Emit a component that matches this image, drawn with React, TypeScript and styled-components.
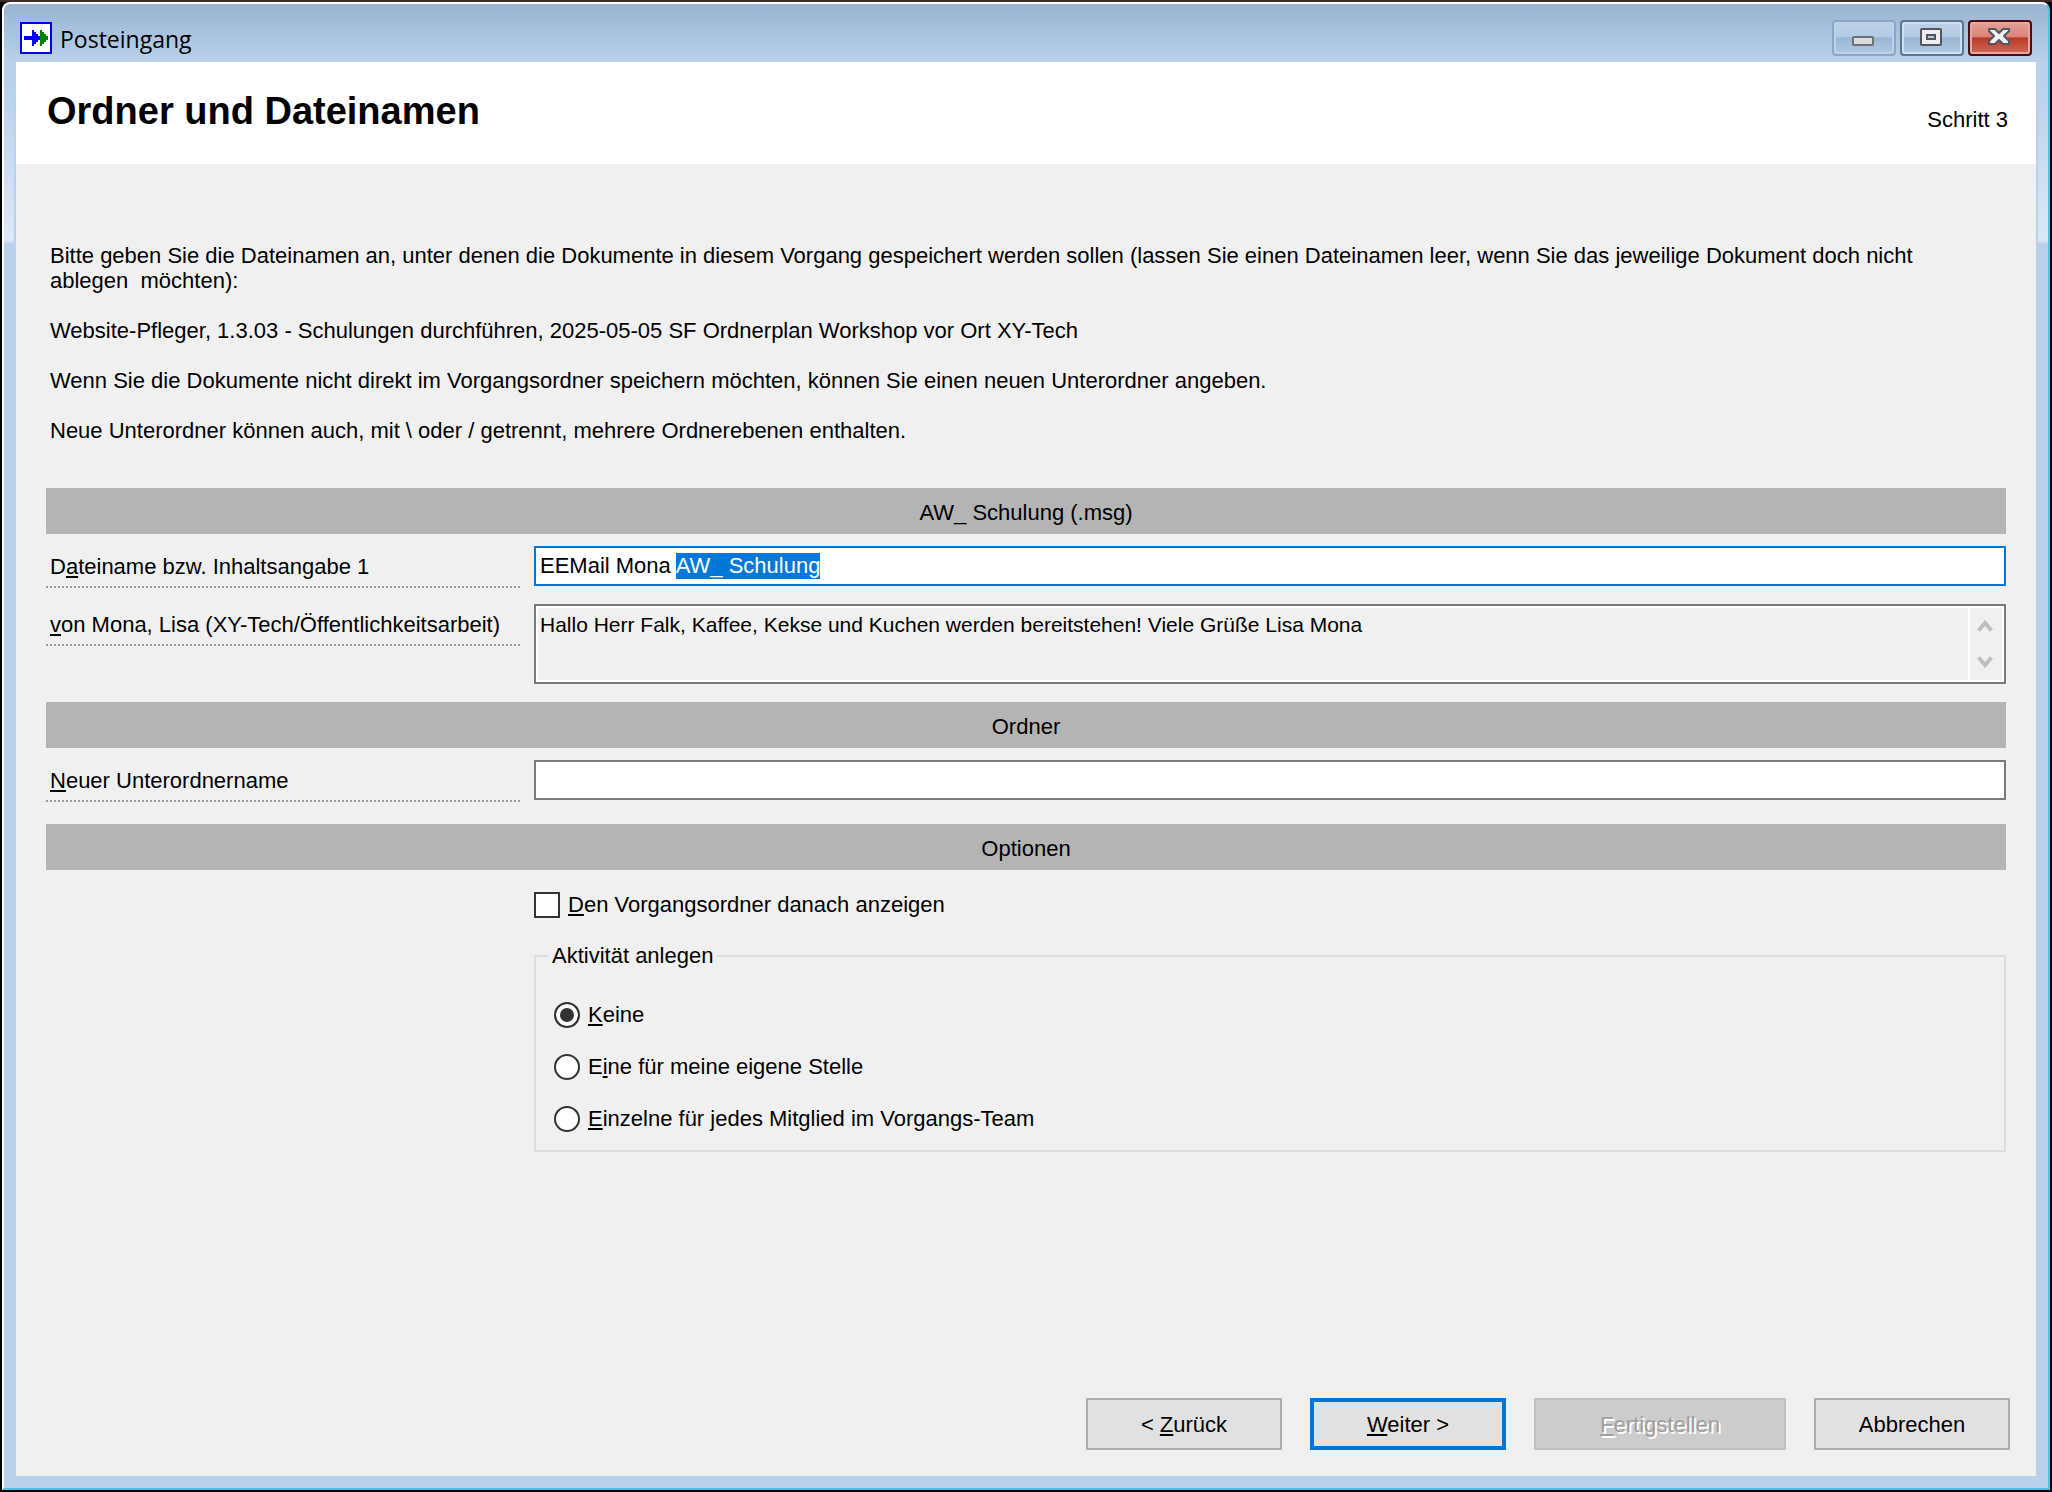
import React, { useEffect, useRef } from 'react';
import styled, { createGlobalStyle } from 'styled-components';

const colors = {
  frame: '#b9d1ea',
  face: '#f0f0f0',
  bar: '#b4b4b4',
  accent: '#0078d7',
  edge: '#7a7a7a',
  cyan: '#45c6e2',
};

const GlobalStyle = createGlobalStyle`
  *, *::before, *::after { box-sizing: border-box; }
  body {
    margin: 0;
    background: #000;
    color: #000;
    font: 22px/25px "Liberation Sans", Arial, sans-serif;
  }
  button, input, textarea { font: inherit; color: inherit; margin: 0; }
`;

const Desktop = styled.div`
  min-height: 100vh;
  display: flex;
  padding: 2px;
  background: linear-gradient(#3a2c2a 0, #3a2c2a 2px, #000 2px);
`;

const Window = styled.div`
  flex: 1;
  display: flex;
  flex-direction: column;
  padding: 0 12px 12px;
  border: 2px solid #fff;
  border-right-color: ${colors.cyan};
  border-bottom-color: ${colors.cyan};
  border-radius: 8px 8px 0 0;
  background: linear-gradient(
    #99b4d1 0,
    ${colors.frame} 58px,
    ${colors.frame} 80px,
    #dde8f6 236px,
    ${colors.frame} 240px
  );
`;

const TitleBar = styled.header`
  display: flex;
  align-items: flex-start;
  height: 58px;
  padding: 16px 4px 0;
`;

const AppIcon = styled.svg`
  width: 32px;
  height: 32px;
  margin-top: 2px;
`;

const Caption = styled.span`
  flex: 1;
  padding: 3px 0 0 8px;
  font: 23px/32px "Open Sans", "Noto Sans", sans-serif;
`;

const WindowButtons = styled.div`
  display: flex;
  gap: 4px;
`;

const WindowButton = styled.button<{ $tone: 'dim' | 'normal' | 'close' }>`
  display: grid;
  place-items: center;
  width: 64px;
  height: 36px;
  padding: 0 2px 2px 0;
  border-radius: 4px;
  border: 2px solid
    ${({ $tone }) => ({ dim: '#8ba5c2', normal: '#5f7690', close: '#4a0d16' })[$tone]};
  box-shadow: inset 0 0 0 2px
    ${({ $tone }) => ({ dim: '#bdd2e8', normal: '#cfe0f2', close: '#e6a79f' })[$tone]};
  background: ${({ $tone }) =>
    $tone === 'close'
      ? 'linear-gradient(#e4a097 0, #d98478 46%, #b83a26 50%, #cf6a58 100%)'
      : 'linear-gradient(#bdd2e8 0, #b2cae3 46%, #99b5d3 50%, #b2cbe6 100%)'};
`;

const Content = styled.main`
  flex: 1;
  display: flex;
  flex-direction: column;
  background: ${colors.face};
  box-shadow: -2px 0 ${colors.frame}, 2px 0 ${colors.frame};
`;

const PageHeader = styled.div`
  display: flex;
  justify-content: space-between;
  align-items: flex-start;
  padding: 27px 28px 31px 31px;
  background: #fff;
`;

const Title = styled.h1`
  margin: 0;
  font-size: 38px;
  line-height: 44px;
`;

const Step = styled.span`
  margin-top: 18px;
`;

const Form = styled.form`
  flex: 1;
  display: flex;
  flex-direction: column;
  padding: 79px 30px 26px;
`;

const Intro = styled.div`
  padding: 0 32px 20px 4px;
`;

const Paragraph = styled.p`
  margin: 0 0 25px;
  white-space: pre-wrap;
`;

const Section = styled.section<{ $after?: number }>`
  display: flex;
  flex-direction: column;
  padding-bottom: ${({ $after = 0 }) => $after}px;
`;

const SectionBar = styled.h2`
  margin: 0;
  padding: 12px 0 9px;
  background: ${colors.bar};
  font-size: 22px;
  font-weight: 400;
  line-height: 25px;
  text-align: center;
`;

const Fields = styled.div<{ $top: number; $gap: number }>`
  display: flex;
  flex-direction: column;
  gap: ${({ $gap }) => $gap}px;
  padding-top: ${({ $top }) => $top}px;
`;

const FieldRow = styled.div`
  display: grid;
  grid-template-columns: 474px 1fr;
  column-gap: 14px;
  align-items: start;
`;

const FieldLabel = styled.label`
  height: 42px;
  padding: 8px 0 0 4px;
  white-space: nowrap;
  background: repeating-linear-gradient(90deg, #9a9a9a 0 2px, transparent 2px 4px) bottom / 100% 2px
    no-repeat;
`;

const Key = styled.u`
  text-decoration-thickness: 2px;
  text-underline-offset: 2px;
  text-decoration-skip-ink: none;
`;

const TextInput = styled.input`
  width: 100%;
  height: 40px;
  padding: 0 4px;
  border: 2px solid ${colors.edge};
  border-radius: 0;
  background: #fff;
  line-height: 26px;
  outline: none;
  &:focus { border-color: ${colors.accent}; }
  &::selection { background: ${colors.accent}; color: #fff; }
`;

const MemoFrame = styled.div`
  display: flex;
  height: 80px;
  border: 2px solid ${colors.edge};
  box-shadow: inset 0 0 0 2px #fff;
  padding: 2px;
`;

const Memo = styled.textarea`
  flex: 1;
  display: block;
  padding: 4px 2px 0;
  border: 0;
  resize: none;
  overflow: hidden;
  background: transparent;
  font-size: 21px;
  line-height: 25px;
  outline: none;
`;

const Scroller = styled.div`
  display: flex;
  flex-direction: column;
  width: 34px;
  padding-right: 2px;
  border-left: 2px solid #fff;
`;

const ScrollButton = styled.button`
  flex: 1;
  display: grid;
  place-items: center;
  padding: 0;
  border: 0;
  background: transparent;
`;

const Choice = styled.label`
  display: flex;
  align-items: center;
  gap: 8px;
  line-height: 26px;
`;

const Tick = styled.input`
  appearance: none;
  width: 26px;
  height: 26px;
  border: 2px solid #333;
  background: #fff;
  &:checked { background: #333; box-shadow: inset 0 0 0 4px #fff; }
`;

const Radio = styled(Tick)`
  border-radius: 50%;
`;

const Group = styled.fieldset`
  margin: 0;
  padding: 0 12px 18px;
  border: 2px solid #dcdcdc;
`;

const Legend = styled.legend`
  padding: 0 4px;
`;

const Choices = styled.div`
  display: flex;
  flex-direction: column;
  gap: 26px;
  padding: 34px 6px 0;
`;

const Footer = styled.div`
  display: flex;
  justify-content: flex-end;
  gap: 28px;
  margin: auto -4px 0 0;
  padding-top: 26px;
`;

const PushButton = styled.button<{ $primary?: boolean; $wide?: boolean }>`
  width: ${({ $wide }) => ($wide ? 252 : 196)}px;
  height: 52px;
  padding: 0;
  border: ${({ $primary }) => ($primary ? `4px solid ${colors.accent}` : '2px solid #adadad')};
  background: #e1e1e1;
  &:disabled {
    border-color: #bfbfbf;
    background: #ccc;
    color: #a0a0a0;
    text-shadow: 2px 2px #fff;
  }
`;

const Chevron = ({ down }: { down?: boolean }) => (
  <svg width="16" height="14" viewBox="0 0 16 14" aria-hidden="true">
    <path
      d={down ? 'M1.500 2.500 8 10 14.500 2.500' : 'M1.500 11.500 8 4 14.500 11.500'}
      fill="none"
      stroke="#bfbfbf"
      strokeWidth="4"
    />
  </svg>
);

export default function App() {
  const nameRef = useRef<HTMLInputElement>(null);

  useEffect(() => {
    const field = nameRef.current;
    if (!field) return;
    field.focus();
    field.setSelectionRange(12, field.value.length);
  }, []);

  return (
    <>
      <GlobalStyle />
      <Desktop>
        <Window>
          <TitleBar>
            <AppIcon viewBox="0 0 32 32" aria-hidden="true">
              <rect x="1" y="1" width="30" height="30" fill="#fff" stroke="#0000e6" strokeWidth="2" />
              <path d="M20 8h2v2h2v2h2v2h2v4h-2v2h-2v2h-2v2h-2z" fill="#008000" />
              <path d="M4 14h8V8h2v2h2v2h2v2h2v4h-2v2h-2v2h-2v2h-2v-6H4z" fill="#00f" />
            </AppIcon>
            <Caption>Posteingang</Caption>
            <WindowButtons>
              <WindowButton type="button" $tone="dim" aria-label="Minimieren">
                <svg width="24" height="20" viewBox="0 0 24 20">
                  <rect x="2" y="10" width="20" height="8" rx="1" fill="#dcdcdc" stroke="#6b6f76" strokeWidth="2" />
                </svg>
              </WindowButton>
              <WindowButton type="button" $tone="normal" aria-label="Maximieren">
                <svg width="24" height="20" viewBox="0 0 24 20">
                  <rect x="2" y="2" width="20" height="16" rx="1" fill="#eee" stroke="#53565e" strokeWidth="2" />
                  <rect x="8" y="8" width="8" height="4" fill="#b2cae3" stroke="#53565e" strokeWidth="2" />
                </svg>
              </WindowButton>
              <WindowButton type="button" $tone="close" aria-label="Schließen">
                <svg width="24" height="20" viewBox="0 0 24 20">
                  <path
                    d="M2 2h6l4 4 4-4h6v2l-5 5 5 5v3h-6l-4-4-4 4H2v-3l5-5-5-5z"
                    fill="#f0f0f0"
                    stroke="#53565e"
                    strokeWidth="2"
                    strokeLinejoin="round"
                  />
                </svg>
              </WindowButton>
            </WindowButtons>
          </TitleBar>

          <Content>
            <PageHeader>
              <Title>Ordner und Dateinamen</Title>
              <Step>Schritt 3</Step>
            </PageHeader>

            <Form onSubmit={(e) => e.preventDefault()}>
              <Intro>
                <Paragraph>
                  {'Bitte geben Sie die Dateinamen an, unter denen die Dokumente in diesem Vorgang gespeichert werden sollen (lassen Sie einen Dateinamen leer, wenn Sie das jeweilige Dokument doch nicht ablegen  möchten):'}
                </Paragraph>
                <Paragraph>
                  Website-Pfleger, 1.3.03 - Schulungen durchführen, 2025-05-05 SF Ordnerplan Workshop vor Ort XY-Tech
                </Paragraph>
                <Paragraph>
                  Wenn Sie die Dokumente nicht direkt im Vorgangsordner speichern möchten, können Sie einen neuen
                  {' '}Unterordner angeben.
                </Paragraph>
                <Paragraph>
                  {'Neue Unterordner können auch, mit \\ oder / getrennt, mehrere Ordnerebenen enthalten.'}
                </Paragraph>
              </Intro>

              <Section $after={18}>
                <SectionBar>AW_ Schulung (.msg)</SectionBar>
                <Fields $top={12} $gap={16}>
                  <FieldRow>
                    <FieldLabel htmlFor="filename">
                      D<Key>a</Key>teiname bzw. Inhaltsangabe 1
                    </FieldLabel>
                    <TextInput id="filename" ref={nameRef} defaultValue="EEMail Mona AW_ Schulung" />
                  </FieldRow>
                  <FieldRow>
                    <FieldLabel htmlFor="message">
                      <Key>v</Key>on Mona, Lisa (XY-Tech/Öffentlichkeitsarbeit)
                    </FieldLabel>
                    <MemoFrame>
                      <Memo
                        id="message"
                        readOnly
                        value="Hallo Herr Falk, Kaffee, Kekse und Kuchen werden bereitstehen! Viele Grüße Lisa Mona"
                      />
                      <Scroller>
                        <ScrollButton type="button" disabled aria-label="Nach oben">
                          <Chevron />
                        </ScrollButton>
                        <ScrollButton type="button" disabled aria-label="Nach unten">
                          <Chevron down />
                        </ScrollButton>
                      </Scroller>
                    </MemoFrame>
                  </FieldRow>
                </Fields>
              </Section>

              <Section $after={22}>
                <SectionBar>Ordner</SectionBar>
                <Fields $top={12} $gap={16}>
                  <FieldRow>
                    <FieldLabel htmlFor="subfolder">
                      <Key>N</Key>euer Unterordnername
                    </FieldLabel>
                    <TextInput id="subfolder" />
                  </FieldRow>
                </Fields>
              </Section>

              <Section>
                <SectionBar>Optionen</SectionBar>
                <FieldRow>
                  <span />
                  <Fields $top={22} $gap={25}>
                    <Choice>
                      <Tick type="checkbox" />
                      <span><Key>D</Key>en Vorgangsordner danach anzeigen</span>
                    </Choice>
                    <Group>
                      <Legend>Aktivität anlegen</Legend>
                      <Choices>
                        <Choice>
                          <Radio type="radio" name="activity" defaultChecked />
                          <span><Key>K</Key>eine</span>
                        </Choice>
                        <Choice>
                          <Radio type="radio" name="activity" />
                          <span>E<Key>i</Key>ne für meine eigene Stelle</span>
                        </Choice>
                        <Choice>
                          <Radio type="radio" name="activity" />
                          <span><Key>E</Key>inzelne für jedes Mitglied im Vorgangs-Team</span>
                        </Choice>
                      </Choices>
                    </Group>
                  </Fields>
                </FieldRow>
              </Section>

              <Footer>
                <PushButton type="button">&lt; <Key>Z</Key>urück</PushButton>
                <PushButton type="submit" $primary><Key>W</Key>eiter &gt;</PushButton>
                <PushButton type="button" $wide disabled><Key>F</Key>ertigstellen</PushButton>
                <PushButton type="button">Abbrechen</PushButton>
              </Footer>
            </Form>
          </Content>
        </Window>
      </Desktop>
    </>
  );
}
